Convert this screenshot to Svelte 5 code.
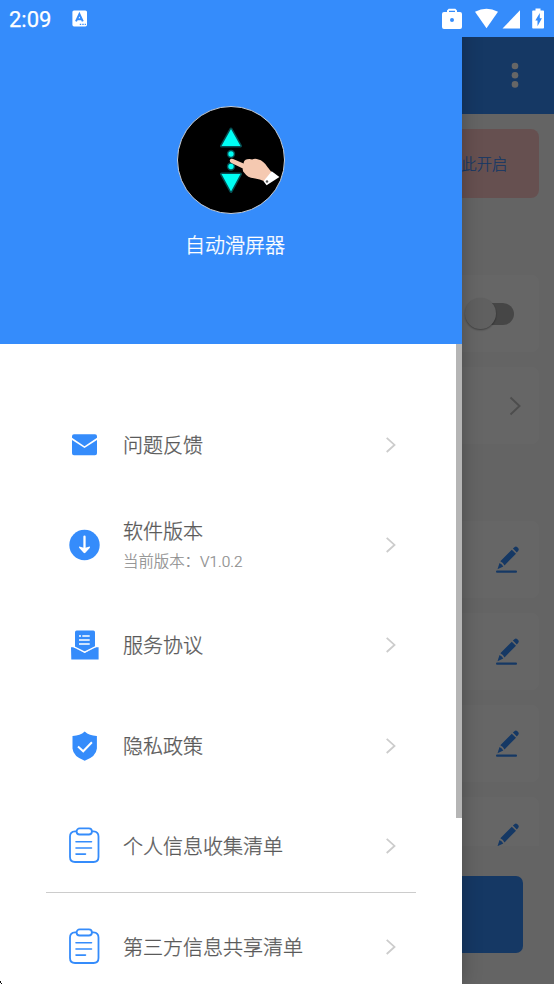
<script>
  const items = [
    { icon: 'mail', label: '问题反馈' },
    { icon: 'download', label: '软件版本', sub: '当前版本：V1.0.2' },
    { icon: 'terms', label: '服务协议' },
    { icon: 'shield', label: '隐私政策' },
    { icon: 'clipboard', label: '个人信息收集清单', divider: true },
    { icon: 'clipboard', label: '第三方信息共享清单' }
  ];
  const actions = [1, 2, 3, 4];
</script>

<div class="screen">
  <header class="status">
    <span class="time">2:09</span>
    <svg class="ime" width="16" height="17" viewBox="0 0 16 17">
      <rect x=".4" y=".4" width="14.6" height="16" rx="1.6" fill="#fff" />
      <path d="M4 11.300 7.400 4l3.400 7.300M5.400 9.200h4" fill="none" stroke="#358cfb" stroke-width="2" />
      <path d="M7.800 14.300h1.400M10.300 14.300h1.400M12.700 14.300h1.200" stroke="#358cfb" stroke-width="1.300" />
    </svg>
    <svg class="indicators" width="106" height="24" viewBox="0 0 106 24" fill="#fff">
      <path fill-rule="evenodd" d="M4 5h3V3.500L8.700 1.800h6.600L17 3.500V5h3a2 2 0 0 1 2 2v13a2 2 0 0 1-2 2H4a2 2 0 0 1-2-2V7a2 2 0 0 1 2-2ZM9 5h6V3.700H9ZM12 11a2 2 0 1 0 0 4 2 2 0 0 0 0-4Z" />
      <path d="M35 4.500Q46.500-1.800 58 4.500L46.500 21Z" transform="translate(0 .3)" />
      <path d="M80 3.200V21.500H62.500Z" />
      <path fill-rule="evenodd" d="M95.500 1.500h5v2h2.700q.8 0 .8.800v16.400q0 .8-.8.800H93q-.8 0-.8-.8V4.300q0-.8.800-.8h2.500ZM99.800 6 95.300 13.500h2.200v5.700l4.400-7.900h-2.100Z" />
    </svg>
  </header>

  <main class="page">
    <div class="appbar">
      <svg width="8" height="26" viewBox="0 0 8 26" fill="#fff"><circle cx="4" cy="4" r="3.300" /><circle cx="4" cy="13.200" r="3.300" /><circle cx="4" cy="22.400" r="3.300" /></svg>
    </div>
    <div class="notice">点此开启</div>
    <div class="card switch-card"><div class="track"><i></i></div></div>
    <div class="card nav-card">
      <svg width="12" height="20" viewBox="0 0 12 20"><path d="m1.500 1.500 9 8.500-9 8.500" fill="none" stroke="#c0c0c0" stroke-width="2" /></svg>
    </div>
    <div class="actions">
      {#each actions as n (n)}
        <div class="card action">
          <svg width="25" height="30" viewBox="0 0 25 30" fill="#358cfb">
            <path d="m1.500 25.200 2-6.300q2.700 1.200 3.800 3.700ZM4.300 17.300 15.800 5.700l4.200 4.100L8.500 21.400q-1.200-2.800-4.200-4.100ZM16.900 4.600l1.800-1.700q1.200-1.100 3 .6 1.800 1.800.6 3.200l-1.500 1.800Z" />
            <rect x="0" y="26.600" width="21" height="2.200" rx="1" />
          </svg>
        </div>
      {/each}
    </div>
    <div class="start"></div>
  </main>
  <div class="scrim"></div>

  <aside class="drawer">
    <div class="profile">
      <svg class="logo" width="108" height="108" viewBox="0 0 108 108">
        <circle cx="54" cy="54" r="53.500" fill="#000" stroke="#d8dfe8" stroke-width=".9" />
        <g stroke="#064c50" stroke-width="3" fill="#00fff4" paint-order="stroke" stroke-linejoin="round">
          <path d="M54 23 63.500 40h-19ZM54 85.500 44.500 68h19Z" />
          <circle cx="54" cy="48" r="2.700" /><circle cx="54" cy="60.500" r="2.700" />
        </g>
        <path d="M52.800 54.200q.7-2 3.300-1.200l10.500 4.500q0-3.500 3.500-4.200 3-.8 5 .3 3-1.600 6.300 0 5 1 9.100 7.500l4.500 5.600-7 8.800q-5-2.200-11-3.200-6.500-.5-9.500-5.200-2.200-2-1.700-4.600L54.500 57q-2-1-1.700-2.800Z" fill="#f5c9b1" />
        <path d="m86.500 75.300 8.200-10 7.700 5.600-12.800 8.300Z" fill="#fff" />
        <circle cx="90" cy="75.500" r="1.200" fill="#555" />
      </svg>
      <h1>自动滑屏器</h1>
    </div>
    <div class="body">
      <nav>
        {#each items as item (item.label)}
          <div class="row">
            <svg class="icon" width="32" height="38" viewBox="0 0 32 38" fill="#358cfb">
              {#if item.icon === 'mail'}
                <path d="M3 11.800v-1.500q0-2 2-2h21q2 0 2 2v1.500l-12.500 8.400Z" />
                <path d="M3 14 15.500 21.900 28 14v13.200q0 2-2 2H5q-2 0-2-2Z" />
              {:else if item.icon === 'download'}
                <circle cx="15.500" cy="19" r="15.200" />
                <path d="M15.500 10.700v11" stroke="#fff" stroke-width="2.300" stroke-linecap="round" />
                <path d="M10.300 20.600 15.500 22l5.200-1.400q.8.500 0 1.400l-4.300 4.700q-.9.900-1.800 0L10.300 22q-.8-.9 0-1.400Z" fill="#fff" />
              {:else if item.icon === 'terms'}
                <path d="M6 6.200q0-1.700 1.700-1.700h16.600Q26 4.500 26 6.200v16.300L16 26 6 22.500Z" />
                <path d="M2 21.200h2.800L15.700 27l10.900-5.800h3V33.500H2.300Z" />
                <path d="M4.600 20.700 15.700 26l11-5.300" fill="none" stroke="#fff" stroke-width="1.300" />
                <path d="M10 10h2M13.300 10h7.400M10 14h10.700M10 18h10.700" stroke="#fff" stroke-width="1.400" />
              {:else if item.icon === 'shield'}
                <path d="M15.700 4.500Q20.500 9 27.900 8.900v12.600q-.7 8-12.200 12.200Q4.200 29.500 3.500 21.500V8.900Q10.900 9 15.700 4.500Z" />
                <path d="m9 19.600 5.200 4.700 8.700-9.100" fill="none" stroke="#fff" stroke-width="2" />
              {:else}
                <g fill="none" stroke="#358cfb" stroke-width="1.800">
                  <path d="M7.600 4.400H6Q1 4.700 1 9.500V30q0 5 5 5h18.500q5 0 5-5V9.500q0-4.800-5-5.100h-1.600" />
                  <rect x="7.600" y="1.400" width="15.300" height="6.100" rx="3" />
                  <path d="M7 14.800h15.500M7 21h15.500M7 27.100h9.500" stroke-linecap="round" stroke-width="1.600" />
                </g>
              {/if}
            </svg>
            <div class="copy">
              <span class="label">{item.label}</span>
              {#if item.sub}<span class="sub">{item.sub}</span>{/if}
            </div>
            <svg class="chevron" width="12" height="18" viewBox="0 0 12 18"><path d="m1.700 1.800 7.800 7.100-7.800 7.100" fill="none" stroke="#ccc" stroke-width="1.800" /></svg>
          </div>
          {#if item.divider}<hr />{/if}
        {/each}
      </nav>
      <div class="scrollbar"></div>
    </div>
  </aside>
  <svg class="corner" width="2" height="3" viewBox="0 0 2 3"><path d="M0 0h1v2H0ZM1 2h1v1H1Z" fill="#111" /></svg>
</div>

<style>
  .screen {
    position: relative;
    width: 554px;
    height: 984px;
    overflow: hidden;
    background: #fafafa;
    font-family: Roboto, "Noto Sans CJK SC", sans-serif;
  }
  .status {
    position: relative;
    z-index: 3;
    box-sizing: border-box;
    height: 37px;
    padding: 0 8px 0 9px;
    display: flex;
    align-items: center;
    background: #358cfb;
    color: #fff;
  }
  .time { font-size: 22px; line-height: 37px; padding-top: 2px; -webkit-text-stroke: .25px #fff; }
  .ime { margin-left: 21px; }
  .indicators { margin-left: auto; }
  .page { height: 947px; display: flex; flex-direction: column; }
  .appbar {
    flex: none;
    height: 77px;
    box-sizing: border-box;
    padding: 0 35px 2px 0;
    display: flex;
    align-items: center;
    justify-content: flex-end;
    background: #358cfb;
  }
  .notice {
    flex: none;
    height: 69px;
    margin: 15px 15px 77px;
    box-sizing: border-box;
    padding: 2px 31.500px 0 0;
    border-radius: 8px;
    background: #ffc8c8;
    color: #358cfb;
    font-size: 15.4px;
    font-weight: 300;
    line-height: 69px;
    text-align: right;
    -webkit-text-stroke: .2px #358cfb;
  }
  .card {
    flex: none;
    height: 77px;
    box-sizing: border-box;
    margin: 0 15px;
    border-radius: 7px;
    background: #fff;
    display: flex;
    align-items: center;
    justify-content: flex-end;
  }
  .switch-card { padding-right: 25.500px; }
  .track {
    width: 45px;
    height: 22px;
    border-radius: 11px;
    background: #b0b0b0;
    display: flex;
    align-items: center;
  }
  .track i {
    width: 31px;
    height: 31px;
    flex: none;
    margin-left: -4px;
    border-radius: 50%;
    background: #f1f1f1;
    box-shadow: 0 1px 2px #0006;
  }
  .nav-card { margin-top: 15px; padding-right: 18px; }
  .actions {
    flex: none;
    height: 325.500px;
    margin-top: 76.500px;
    display: flex;
    flex-direction: column;
    gap: 15.200px;
    overflow: hidden;
  }
  .action { padding-right: 18px; }
  .start {
    height: 77px;
    margin: 30px 31px 0;
    border-radius: 7px;
    background: #358cfb;
  }
  .scrim { position: absolute; inset: 37px 0 0; background: #0009; }
  .drawer {
    position: absolute;
    inset: 0 auto 0 0;
    width: 462px;
    display: flex;
    flex-direction: column;
    background: #fff;
    box-shadow: 0 0 18px #0004;
  }
  .profile {
    flex: none;
    height: 344px;
    box-sizing: border-box;
    padding-top: 106px;
    display: flex;
    flex-direction: column;
    align-items: center;
    background: #358cfb;
  }
  h1 {
    margin: 17px 0 0 8px;
    color: #fff;
    font-size: 20px;
    font-weight: 300;
    line-height: 30px;
    -webkit-text-stroke: .35px #fff;
  }
  .body { display: flex; height: 640px; overflow: hidden; }
  nav { flex: 1; padding: 50.400px 39.500px 0 46px; }
  .row {
    height: 100.400px;
    box-sizing: border-box;
    padding: 0 19px 0 23px;
    display: flex;
    align-items: center;
  }
  .icon { flex: none; }
  .copy { margin-left: 22px; padding-top: 2px; display: flex; flex-direction: column; }
  .label { font-size: 20px; font-weight: 300; line-height: 30px; color: #5a5a5a; -webkit-text-stroke: .3px #5a5a5a; }
  .sub { margin-top: 3px; font-size: 15.400px; line-height: 24px; font-weight: 300; color: #8c8c8c; -webkit-text-stroke: .2px #8c8c8c; }
  .chevron { margin-left: auto; }
  hr { height: 1px; margin: -4.200px 0 3.200px; border: 0; background: #ccc; }
  .scrollbar { width: 6.500px; height: 474px; background: #b5b5b5; }
  .corner { position: absolute; left: 0; bottom: 0; }
</style>
